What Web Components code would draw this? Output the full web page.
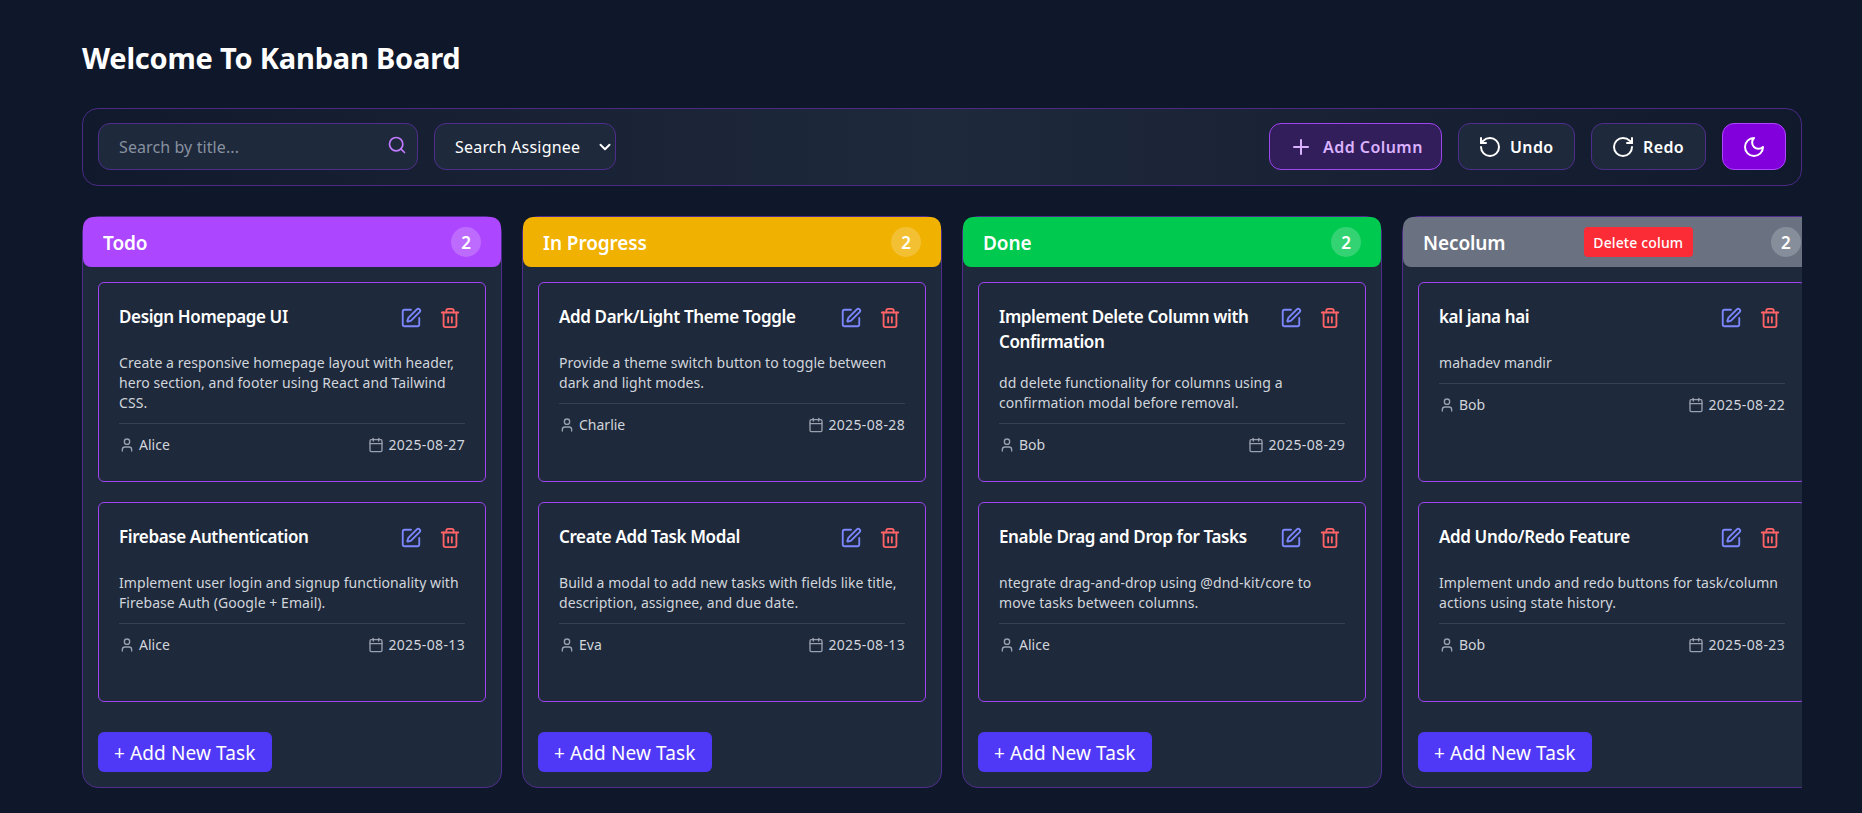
<!doctype html>
<html lang="en">
<head>
<meta charset="utf-8">
<title>Kanban Board</title>
<style>
  html, body {
    margin: 0;
    background-color: #0f172a;
    color: #fff;
    font-family: "Noto Sans", "Open Sans", sans-serif;
  }
</style>
</head>
<body>
<kanban-page heading="Welcome To Kanban Board">
  <kanban-toolbar slot="toolbar"></kanban-toolbar>

  <kanban-column name="Todo" count="2" color="#ad46ff">
    <task-card heading="Design Homepage UI" assignee="Alice" due="2025-08-27">Create a responsive homepage layout with header, hero section, and footer using React and Tailwind CSS.</task-card>
    <task-card heading="Firebase Authentication" assignee="Alice" due="2025-08-13">Implement user login and signup functionality with Firebase Auth (Google + Email).</task-card>
  </kanban-column>

  <kanban-column name="In Progress" count="2" color="#f0b100">
    <task-card heading="Add Dark/Light Theme Toggle" assignee="Charlie" due="2025-08-28">Provide a theme switch button to toggle between dark and light modes.</task-card>
    <task-card heading="Create Add Task Modal" assignee="Eva" due="2025-08-13">Build a modal to add new tasks with fields like title, description, assignee, and due date.</task-card>
  </kanban-column>

  <kanban-column name="Done" count="2" color="#00c950">
    <task-card heading="Implement Delete Column with Confirmation" assignee="Bob" due="2025-08-29">dd delete functionality for columns using a confirmation modal before removal.</task-card>
    <task-card heading="Enable Drag and Drop for Tasks" assignee="Alice">ntegrate drag-and-drop using @dnd-kit/core to move tasks between columns.</task-card>
  </kanban-column>

  <kanban-column name="Necolum" count="2" color="#6a7282" removable>
    <task-card heading="kal jana hai" assignee="Bob" due="2025-08-22">mahadev mandir</task-card>
    <task-card heading="Add Undo/Redo Feature" assignee="Bob" due="2025-08-23">Implement undo and redo buttons for task/column actions using state history.</task-card>
  </kanban-column>
</kanban-page>

<script>
  const ICONS = {
    search: '<path d="m21 21-4.34-4.34"/><circle cx="11" cy="11" r="8"/>',
    chevron: '<path d="m6 9 6 6 6-6"/>',
    plus: '<path d="M5 12h14"/><path d="M12 5v14"/>',
    undo: '<path d="M3 12a9 9 0 1 0 9-9 9.75 9.75 0 0 0-6.74 2.74L3 8"/><path d="M3 3v5h5"/>',
    redo: '<path d="M21 12a9 9 0 1 1-9-9c2.52 0 4.93 1 6.74 2.74L21 8"/><path d="M21 3v5h-5"/>',
    moon: '<path d="M12 3a6 6 0 0 0 9 9 9 9 0 1 1-9-9Z"/>',
    edit: '<path d="M12 3H5a2 2 0 0 0-2 2v14a2 2 0 0 0 2 2h14a2 2 0 0 0 2-2v-7"/><path d="M18.375 2.625a1 1 0 0 1 3 3l-9.013 9.014a2 2 0 0 1-.853.505l-2.873.84a.5.5 0 0 1-.62-.62l.84-2.873a2 2 0 0 1 .506-.852z"/>',
    trash: '<path d="M3 6h18"/><path d="M19 6v14c0 1-1 2-2 2H7c-1 0-2-1-2-2V6"/><path d="M8 6V4c0-1 1-2 2-2h4c1 0 2 1 2 2v2"/><line x1="10" x2="10" y1="11" y2="17"/><line x1="14" x2="14" y1="11" y2="17"/>',
    user: '<path d="M19 21v-2a4 4 0 0 0-4-4H9a4 4 0 0 0-4 4v2"/><circle cx="12" cy="7" r="4"/>',
    calendar: '<path d="M8 2v4"/><path d="M16 2v4"/><rect width="18" height="18" x="3" y="4" rx="2"/><path d="M3 10h18"/>'
  };

  class KanbanIcon extends HTMLElement {
    connectedCallback() {
      const size = this.getAttribute('size') || 24;
      const stroke = this.getAttribute('stroke') || 2;
      const root = this.shadowRoot || this.attachShadow({mode: 'open'});
      root.innerHTML = `
        <style>
          :host { display: inline-flex; flex: none; }
          svg { display: block; }
        </style>
        <svg xmlns="http://www.w3.org/2000/svg" width="${size}" height="${size}" viewBox="0 0 24 24" fill="none"
          stroke="currentColor" stroke-width="${stroke}" stroke-linecap="round" stroke-linejoin="round">${ICONS[this.getAttribute('name')]}</svg>`;
    }
  }
  customElements.define('kanban-icon', KanbanIcon);

  class KanbanPage extends HTMLElement {
    constructor() {
      super();
      this.attachShadow({mode: 'open'}).innerHTML = `
        <style>
          :host { display: block; padding: 40px 60px 25px 82px; height: 813px; box-sizing: border-box; overflow: hidden; }
          h1 { margin: 0 0 32px; font-size: 29px; line-height: 36px; font-weight: 700; letter-spacing: -0.2px; color: #fff; }
          .board { display: flex; gap: 20px; margin-top: 30px; overflow: hidden; }
        </style>
        <h1></h1>
        <slot name="toolbar"></slot>
        <div class="board"><slot></slot></div>`;
    }
    connectedCallback() {
      this.shadowRoot.querySelector('h1').textContent = this.getAttribute('heading');
    }
  }
  customElements.define('kanban-page', KanbanPage);

  class KanbanToolbar extends HTMLElement {
    constructor() {
      super();
      this.attachShadow({mode: 'open'}).innerHTML = `
        <style>
          :host {
            display: flex; justify-content: space-between; align-items: center;
            padding: 14px 15px 15px; box-sizing: border-box;
            border: 1px solid #4a2a85; border-radius: 16px;
            background: linear-gradient(to right, #111a2c, #1e293b, #111a2c);
          }
          .group { display: flex; align-items: center; gap: 16px; }
          .field { position: relative; display: flex; }
          input, select, button {
            height: 47px; box-sizing: border-box; border: 1px solid #4f2d8c; border-radius: 12px;
            background-color: #1e293b; color: #fff; font: inherit; font-size: 16px; outline: none;
          }
          input { width: 320px; padding: 0 40px 0 20px; letter-spacing: 0.1px; }
          input::placeholder { color: #8891a0; opacity: 1; }
          .field kanban-icon { position: absolute; pointer-events: none; }
          .find { right: 11px; top: 12px; color: #c27aff; }
          select { appearance: none; width: 182px; padding: 0 0 0 20px; letter-spacing: 0.2px; }
          .arrow { right: 2px; top: 15px; color: #fff; }
          button { display: flex; align-items: center; padding: 0 19px; gap: 8px; font-weight: 600; letter-spacing: 0.37px; white-space: nowrap; }
          .add { width: 173px; padding-right: 0; gap: 10px; background-color: #331e5c; border-color: #a044f0; color: #dab2ff; letter-spacing: 0.45px; }
          .undo { width: 117px; }
          .redo { width: 115px; }
          .theme { width: 64px; padding: 0; justify-content: center; background-color: #8200db; border-color: #ad46ff; }
        </style>
        <div class="group">
          <div class="field">
            <input type="text" placeholder="Search by title...">
            <kanban-icon class="find" name="search" size="20"></kanban-icon>
          </div>
          <div class="field">
            <select><option>Search Assignee</option></select>
            <kanban-icon class="arrow" name="chevron" size="18" stroke="2.6"></kanban-icon>
          </div>
        </div>
        <div class="group">
          <button class="add"><kanban-icon name="plus" size="24"></kanban-icon>Add Column</button>
          <button class="undo"><kanban-icon name="undo" size="24"></kanban-icon>Undo</button>
          <button class="redo"><kanban-icon name="redo" size="24"></kanban-icon>Redo</button>
          <button class="theme"><kanban-icon name="moon" size="24"></kanban-icon></button>
        </div>`;
    }
  }
  customElements.define('kanban-toolbar', KanbanToolbar);

  class KanbanColumn extends HTMLElement {
    constructor() {
      super();
      this.attachShadow({mode: 'open'}).innerHTML = `
        <style>
          :host {
            display: block; flex: none; width: 420px; box-sizing: border-box;
            padding-bottom: 15px;
            border: 1px solid #4f2d8c; border-radius: 16px; background-color: #1e293b;
          }
          header {
            display: flex; align-items: center; justify-content: space-between;
            height: 50px; padding: 0 20px; border-radius: 10px 10px 8px 8px;
          }
          h2 { margin: 1px 0 0; font-size: 19px; line-height: 28px; font-weight: 600; letter-spacing: -0.1px; color: #fff; }
          .remove {
            height: 30px; padding: 0 9.5px; border: 0; border-radius: 4px; background-color: #fb2c36; color: #fff;
            font: inherit; font-size: 14px; font-weight: 500; letter-spacing: 0.13px;
          }
          .badge {
            display: flex; align-items: center; justify-content: center; width: 30px; height: 30px;
            border-radius: 50%; background-color: rgba(255, 255, 255, 0.2); font-size: 17px; font-weight: 600; color: #fff;
          }
          .tasks { display: flex; flex-direction: column; gap: 20px; padding: 15px 15px 30px; }
          .new {
            display: block; height: 40px; margin-left: 15px; padding: 2px 16px 0; border: 0; border-radius: 6px;
            background-color: #4f39f6; color: #fff; font: inherit; font-size: 19px; letter-spacing: 0.12px;
          }
        </style>
        <header>
          <h2></h2>
          <button class="remove">Delete colum</button>
          <span class="badge"></span>
        </header>
        <div class="tasks"><slot></slot></div>
        <button class="new">+ Add New Task</button>`;
    }
    connectedCallback() {
      const root = this.shadowRoot;
      root.querySelector('h2').textContent = this.getAttribute('name');
      root.querySelector('.badge').textContent = this.getAttribute('count');
      root.querySelector('header').style.backgroundColor = this.getAttribute('color');
      if (!this.hasAttribute('removable')) root.querySelector('.remove').remove();
    }
  }
  customElements.define('kanban-column', KanbanColumn);

  class TaskCard extends HTMLElement {
    constructor() {
      super();
      this.attachShadow({mode: 'open'}).innerHTML = `
        <style>
          :host {
            display: block; height: 200px; box-sizing: border-box; padding: 20px;
            border: 1px solid #a044f0; border-radius: 6px; background-color: #1e293b;
          }
          .top { display: flex; justify-content: space-between; align-items: flex-start; gap: 8px; min-height: 30px; margin-bottom: 20px; }
          h3 { margin: 1px 0 -1px; font-size: 17px; line-height: 25px; font-weight: 600; letter-spacing: -0.38px; color: #fff; }
          .actions { display: flex; gap: 9px; flex: none; }
          button { display: flex; padding: 4px; border: 0; background: none; }
          .edit { color: #7c86ff; }
          .trash { color: #ff6467; }
          p { margin: 0 0 10px; font-size: 14px; line-height: 20px; letter-spacing: 0.06px; color: #d1d5dc; }
          .meta {
            display: flex; justify-content: space-between; padding-top: 11px;
            border-top: 1px solid #364153; font-size: 14px; line-height: 20px; color: #d1d5dc;
          }
          .meta span { display: flex; align-items: center; gap: 4px; }
          .meta kanban-icon { color: #99a1af; }
          .due { letter-spacing: 0.35px; }
        </style>
        <div class="top">
          <h3></h3>
          <div class="actions">
            <button class="edit"><kanban-icon name="edit" size="22"></kanban-icon></button>
            <button class="trash"><kanban-icon name="trash" size="22"></kanban-icon></button>
          </div>
        </div>
        <p><slot></slot></p>
        <div class="meta">
          <span><kanban-icon name="user" size="16"></kanban-icon><span class="who"></span></span>
          <span class="due-wrap"><kanban-icon name="calendar" size="16"></kanban-icon><span class="due"></span></span>
        </div>`;
    }
    connectedCallback() {
      const root = this.shadowRoot;
      root.querySelector('h3').textContent = this.getAttribute('heading');
      root.querySelector('.who').textContent = this.getAttribute('assignee');
      if (this.hasAttribute('due')) root.querySelector('.due').textContent = this.getAttribute('due');
      else root.querySelector('.due-wrap').remove();
    }
  }
  customElements.define('task-card', TaskCard);
</script>
</body>
</html>
